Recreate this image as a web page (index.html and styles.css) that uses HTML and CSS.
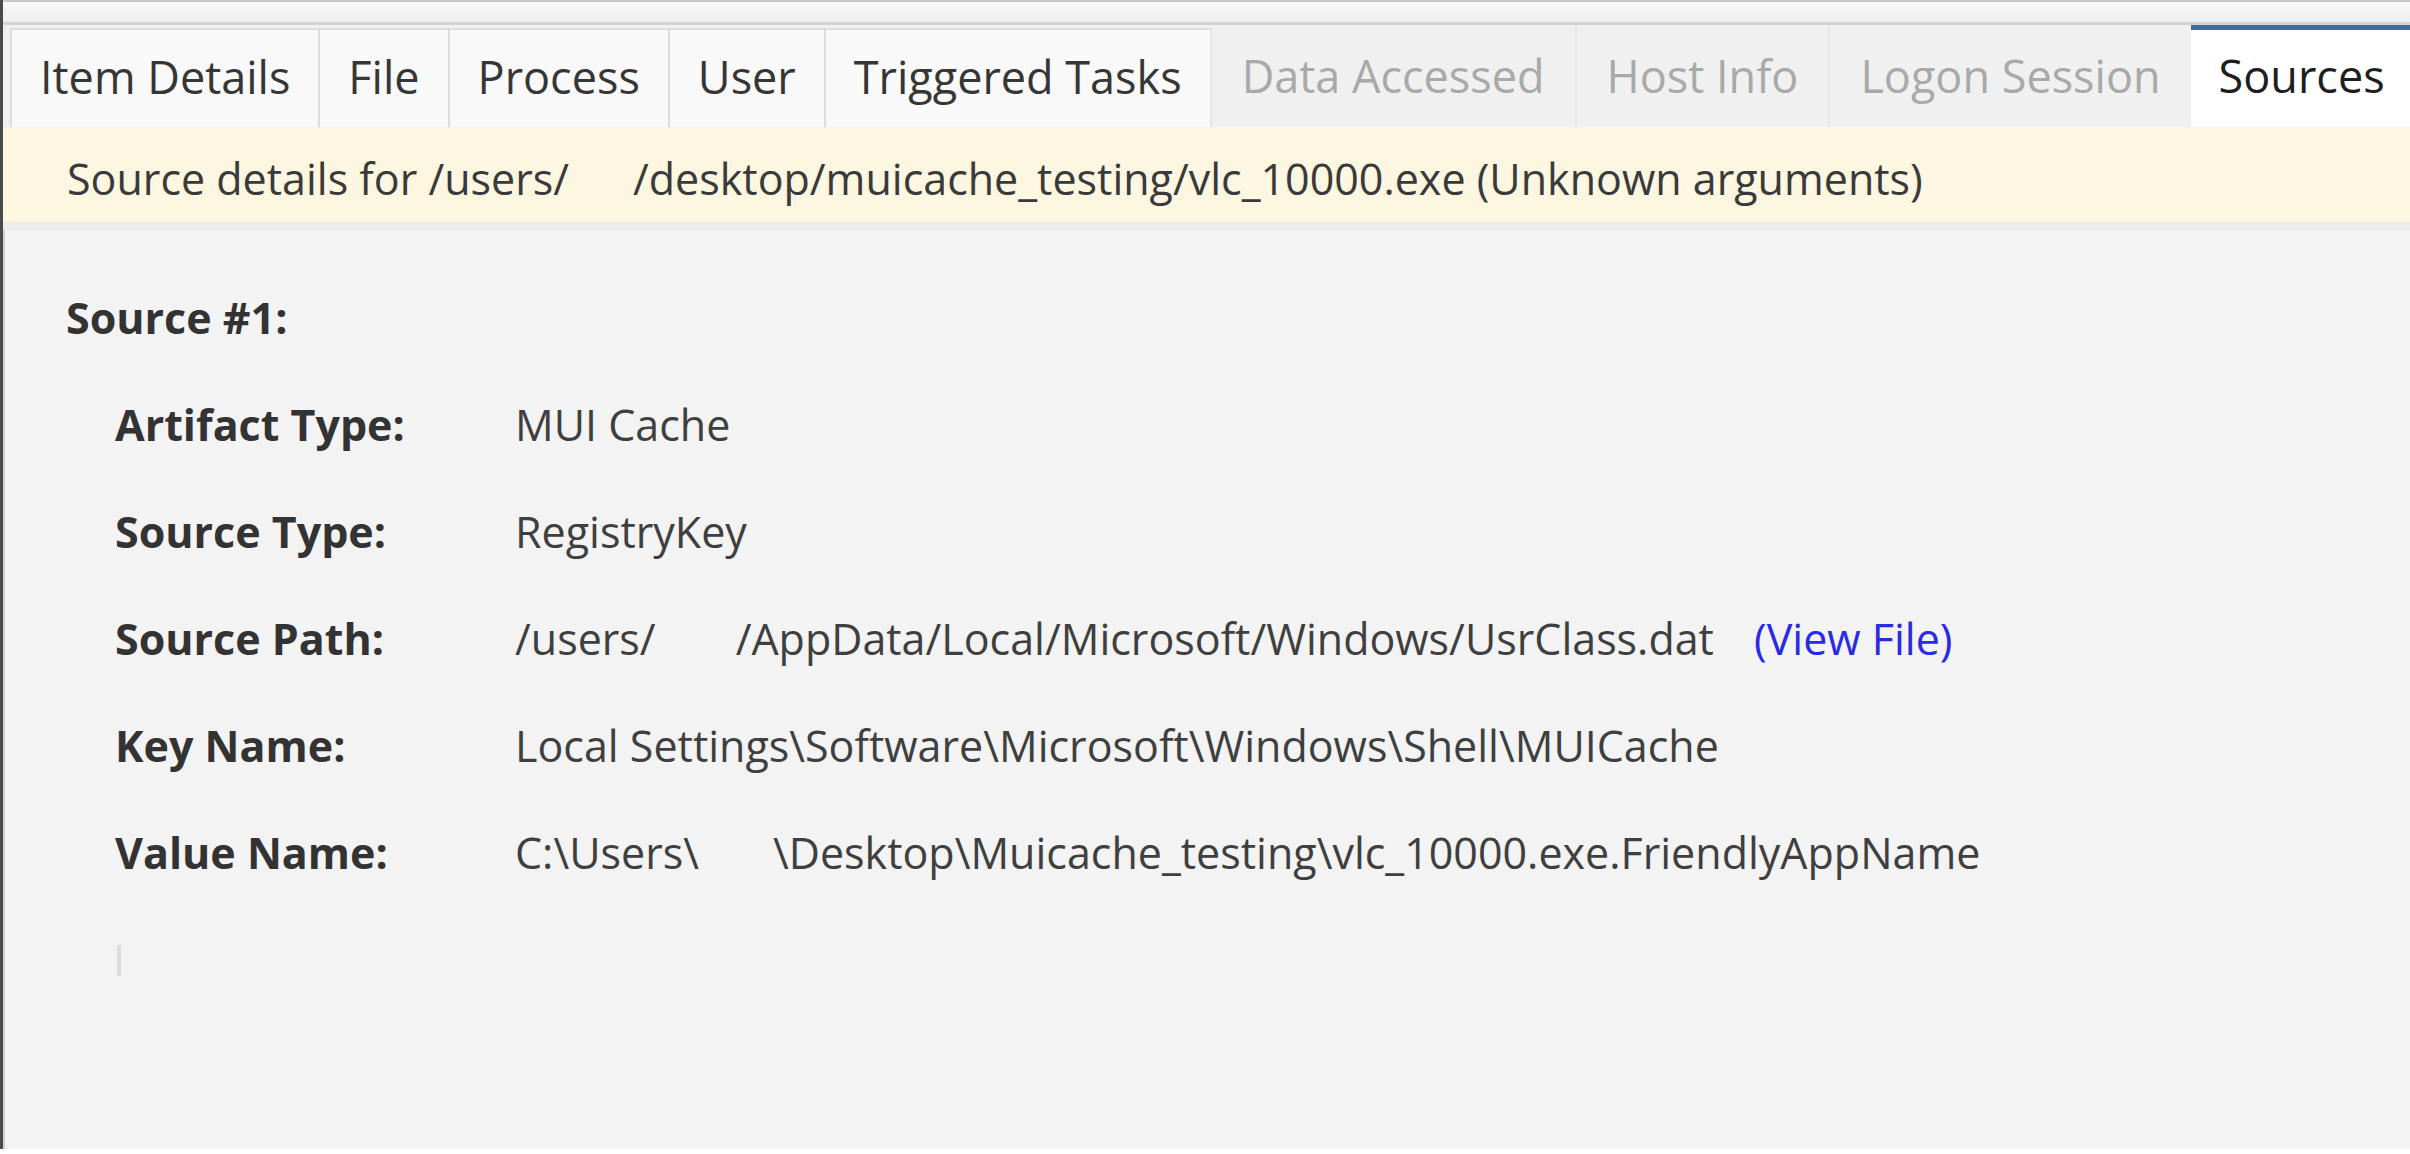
FILE: index.html
```html
<!DOCTYPE html>
<html lang="en">
<head>
<meta charset="utf-8">
<title>Sources</title>
<link rel="stylesheet" href="styles.css">
</head>
<body>
<div class="window">
  <div class="topbar"></div>
  <div class="tabs">
    <div class="tab">Item Details</div>
    <div class="tab">File</div>
    <div class="tab">Process</div>
    <div class="tab">User</div>
    <div class="tab tab-last">Triggered Tasks</div>
    <div class="tab tab-disabled">Data Accessed</div>
    <div class="tab tab-disabled">Host Info</div>
    <div class="tab tab-disabled">Logon Session</div>
    <div class="tab tab-active">Sources</div>
  </div>
  <div class="banner">Source details for /users/<span class="redact r-banner"></span>/desktop/muicache_testing/vlc_10000.exe (Unknown arguments)</div>
  <div class="content">
    <div class="heading">Source #1:</div>
    <div class="fields">
      <div class="label">Artifact Type:</div>
      <div class="value">MUI Cache</div>
      <div class="label">Source Type:</div>
      <div class="value">RegistryKey</div>
      <div class="label">Source Path:</div>
      <div class="value">/users/<span class="redact r-path"></span>/AppData/Local/Microsoft/Windows/UsrClass.dat<a class="link" href="#">(View File)</a></div>
      <div class="label">Key Name:</div>
      <div class="value">Local Settings\Software\Microsoft\Windows\Shell\MUICache</div>
      <div class="label">Value Name:</div>
      <div class="value">C:\Users\<span class="redact r-value"></span>\Desktop\Muicache_testing\vlc_10000.exe.FriendlyAppName</div>
    </div>
    <div class="caret"></div>
  </div>
</div>
</body>
</html>
```

FILE: styles.css
```css
* { box-sizing: border-box; }

html, body {
  margin: 0;
  padding: 0;
  background: #ffffff;
}

body {
  font-family: "Open Sans", "Noto Sans", "Liberation Sans", sans-serif;
  color: #3a3a3a;
  width: 2410px;
  height: 1154px;
  overflow: hidden;
}

.window {
  height: 1149px;
  background: #f3f3f3;
  border-left: 3px solid #4a4a4a;
  box-shadow: inset 2px 0 0 #cfcfcf;
  display: flex;
  flex-direction: column;
}

.topbar {
  height: 25px;
  flex: none;
  border-top: 2px solid #c6c6c6;
  border-bottom: 3px solid #d3d3d3;
  background: linear-gradient(#f8f8f8, #ededed);
}

.tabs {
  display: flex;
  height: 102px;
  flex: none;
  padding-left: 7px;
  background: #f0f0f0;
  align-items: stretch;
}

.tab {
  display: flex;
  align-items: center;
  margin-top: 3px;
  padding: 0 28px 4px 28px;
  font-size: 45px;
  color: #363636;
  background: #f9f9f9;
  border-top: 2px solid #dedede;
  border-left: 2px solid #dcdcdc;
  white-space: nowrap;
}

.tab-last {
  border-right: 2px solid #e4e4e4;
}

.tab-disabled {
  margin-top: 0;
  padding: 3px 30px 4px 30px;
  color: #a9a9a9;
  background: #f0f0f0;
  border-top: none;
  border-left: 2px solid #e7e7e7;
}

.tab-last + .tab-disabled {
  border-left: none;
}

.tab-active {
  flex: 1;
  margin-top: 0;
  padding-top: 0;
  padding-bottom: 6px;
  color: #1e1e1e;
  background: #ffffff;
  border-top: 5px solid #4268a8;
  border-left: none;
}

.banner {
  height: 103px;
  flex: none;
  padding: 8px 0 0 64px;
  display: flex;
  align-items: center;
  font-size: 43px;
  color: #3a3a3a;
  background: #fdf6e0;
  border-bottom: 8px solid #ebebeb;
  white-space: nowrap;
}

.redact {
  display: inline-block;
}

.r-banner { width: 64px; }
.r-path { width: 80px; }
.r-value { width: 74px; }

.content {
  padding: 34px 0 0 63px;
}

.heading {
  font-size: 43px;
  font-weight: 700;
  line-height: 107px;
  color: #333333;
}

.fields {
  display: grid;
  grid-template-columns: 400px auto;
  padding-left: 49px;
  font-size: 43px;
  line-height: 107px;
}

.label {
  font-weight: 700;
  color: #333333;
}

.value {
  color: #3f3f3f;
  white-space: nowrap;
}

.link {
  margin-left: 40px;
  color: #2a2ae6;
  text-decoration: none;
}

.caret {
  width: 4px;
  height: 31px;
  margin: 39px 0 0 51px;
  background: #dcdcdc;
}
```
